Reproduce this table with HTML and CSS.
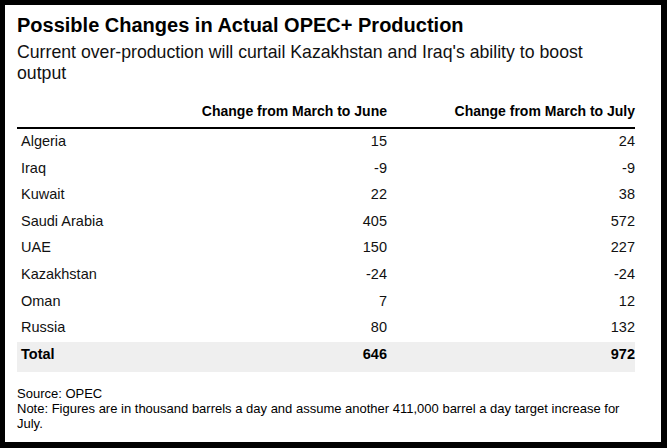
FILE: index.html
```html
<!DOCTYPE html>
<html lang="en">
<head>
<meta charset="utf-8">
<title>Possible Changes in Actual OPEC+ Production</title>
<link rel="stylesheet" href="styles.css">
</head>
<body>
<div class="frame">
  <h1 class="title">Possible Changes in Actual OPEC+ Production</h1>
  <p class="subtitle">Current over-production will curtail Kazakhstan and Iraq's ability to boost output</p>
  <table class="data">
    <colgroup>
      <col class="c-name">
      <col class="c-num">
      <col class="c-num">
    </colgroup>
    <thead>
      <tr>
        <th class="name"></th>
        <th class="num">Change from March to June</th>
        <th class="num">Change from March to July</th>
      </tr>
    </thead>
    <tbody>
      <tr><td class="name">Algeria</td><td class="num">15</td><td class="num">24</td></tr>
      <tr><td class="name">Iraq</td><td class="num">-9</td><td class="num">-9</td></tr>
      <tr><td class="name">Kuwait</td><td class="num">22</td><td class="num">38</td></tr>
      <tr><td class="name">Saudi Arabia</td><td class="num">405</td><td class="num">572</td></tr>
      <tr><td class="name">UAE</td><td class="num">150</td><td class="num">227</td></tr>
      <tr><td class="name">Kazakhstan</td><td class="num">-24</td><td class="num">-24</td></tr>
      <tr><td class="name">Oman</td><td class="num">7</td><td class="num">12</td></tr>
      <tr><td class="name">Russia</td><td class="num">80</td><td class="num">132</td></tr>
      <tr class="total"><td class="name">Total</td><td class="num">646</td><td class="num">972</td></tr>
    </tbody>
  </table>
  <div class="footer">
    <p class="source">Source: OPEC</p>
    <p class="note">Note: Figures are in thousand barrels a day and assume another 411,000 barrel a day target increase for July.</p>
  </div>
</div>
</body>
</html>
```

FILE: styles.css
```css
html, body {
  margin: 0;
  padding: 0;
  background: #000;
}

body {
  font-family: "Liberation Sans", Arial, sans-serif;
  color: #000;
}

.frame {
  box-sizing: border-box;
  width: 667px;
  height: 448px;
  background: #fff;
  border-style: solid;
  border-color: #000;
  border-width: 5px 6px 6px 5px;
  padding: 8px 26px 0 12px;
  overflow: hidden;
}

.title {
  margin: 0;
  font-size: 20px;
  line-height: 24px;
  font-weight: bold;
}

.subtitle {
  margin: 5px 0 0;
  font-size: 17.7px;
  line-height: 20.5px;
  font-weight: normal;
  color: #111;
}

.data {
  margin-top: 20px;
  width: 618px;
  border-collapse: collapse;
  table-layout: fixed;
}

.c-name {
  width: 122px;
}

.c-num {
  width: 248px;
}

.data th {
  font-size: 14px;
  line-height: 17px;
  font-weight: bold;
  padding: 0 0 7px;
  border-bottom: 2px solid #000;
}

.data td {
  font-size: 14.5px;
  line-height: 17px;
  padding: 4px 0 5.6px;
  color: #111;
}

.name {
  text-align: left;
  padding-left: 4px !important;
}

.num {
  text-align: right;
}

.total td {
  background: #efefef;
  font-weight: bold;
  color: #000;
  padding-bottom: 9px;
}

.footer {
  margin-top: 14.5px;
  font-size: 13px;
  line-height: 15px;
}

.footer p {
  margin: 0;
}
```
